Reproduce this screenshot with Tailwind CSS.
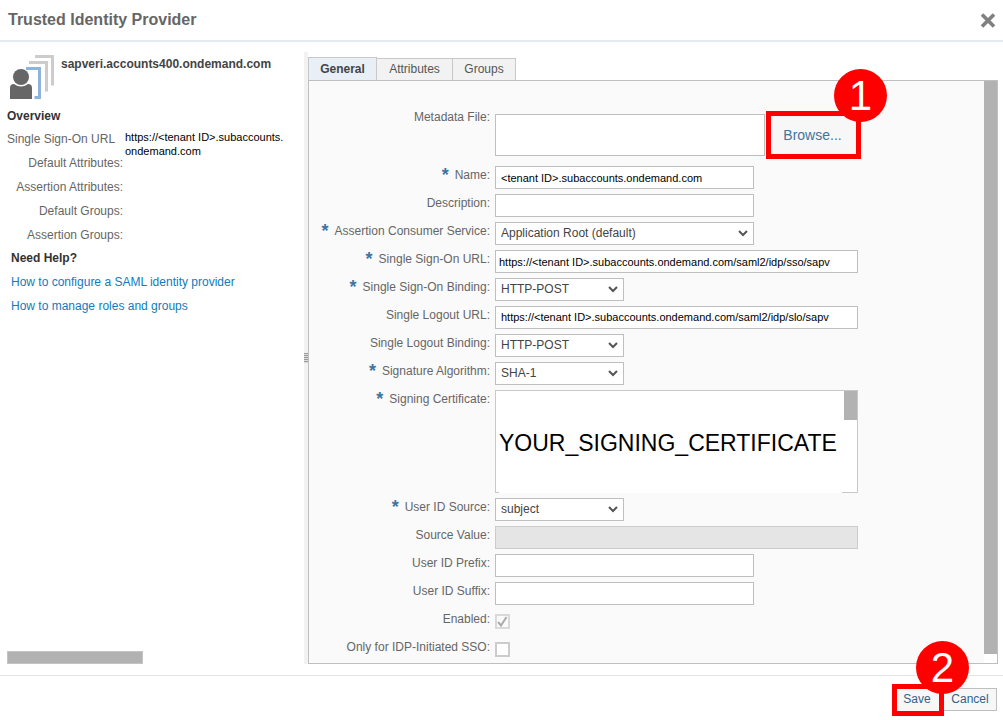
<!DOCTYPE html>
<html lang="en">
<head>
<meta charset="utf-8">
<title>Trusted Identity Provider</title>
<script src="https://cdn.jsdelivr.net/npm/@tailwindcss/browser@4"></script>
</head>
<body class="flex min-h-screen flex-col bg-white font-['Liberation_Sans',Arial,sans-serif] text-[12px] leading-[18px] text-[#666]">
<header class="flex h-[42px] shrink-0 items-center justify-between border-b-2 border-[#e3eaf0] pr-[7px] pl-2">
  <h1 class="text-[16px] font-bold text-[#666]">Trusted Identity Provider</h1>
  <button type="button" aria-label="Close" class="flex size-4 items-center justify-center">
    <svg class="size-4" viewBox="0 0 16 16" fill="none" stroke="#808080" stroke-width="3.6"><path d="M2 2.500l12 12M14 2.500l-12 12"/></svg>
  </button>
</header>

<main class="flex flex-1 pt-[10px] pr-[5px] pb-[11px]">
  <aside class="flex w-[304px] shrink-0 flex-col pl-[7px]">
    <div class="flex gap-[6px]">
      <svg class="mt-[3px] size-[48px]" viewBox="0 0 48 48" fill="none">
        <path d="M28 1.500h17.500v29" stroke="#ccc" stroke-width="3"/>
        <path d="M22 7.500h17.500v29" stroke="#ccc" stroke-width="3"/>
        <path d="M19 13.500h13.500v29h-5" stroke="#8eb4d9" stroke-width="3"/>
        <circle cx="14" cy="22" r="8" fill="#666"/>
        <path d="M3 44V33q0-4 4-4 7 5 14 0 4 0 4 4v11z" fill="#666"/>
      </svg>
      <h2 class="mt-[3px] font-bold text-[#444]">sapveri.accounts400.ondemand.com</h2>
    </div>
    <h3 class="mt-[4px] font-bold text-[#333]">Overview</h3>
    <dl class="mt-[5px] grid grid-cols-[116px_1fr] auto-rows-[18px] gap-y-[6px] text-right">
      <dt class="text-left">Single Sign-On URL</dt>
      <dd class="pl-[2px] text-left text-[11px] leading-[14px] text-black">https://&lt;tenant ID&gt;.subaccounts.<br>ondemand.com</dd>
      <dt class="col-start-1">Default Attributes:</dt>
      <dt class="col-start-1">Assertion Attributes:</dt>
      <dt class="col-start-1">Default Groups:</dt>
      <dt class="col-start-1">Assertion Groups:</dt>
    </dl>
    <div class="mt-[5px] flex flex-col items-start gap-[6px] pl-[4px]">
      <h3 class="font-bold text-[#333]">Need Help?</h3>
      <a href="#" class="text-[#0f7bbd]">How to configure a SAML identity provider</a>
      <a href="#" class="text-[#0f7bbd]">How to manage roles and groups</a>
    </div>
    <div class="mt-auto h-[13px] w-[136px] border border-[#c4c4c4] bg-[#b2b2b2]"></div>
  </aside>

  <div class="flex w-[4px] shrink-0 items-center bg-[#f2f2f2]"><span class="h-[10px] w-full bg-[repeating-linear-gradient(#999_0_1px,#ddd_1px_2px)]"></span></div>

  <section class="flex flex-1 flex-col pt-[5px]">
    <div role="tablist" class="flex h-[23px] items-end text-[#555]">
      <button type="button" role="tab" aria-selected="true" class="h-[23px] w-[69px] border border-b-0 border-[#c8c8c8] bg-[#e8eff7] font-bold text-[#444]">General</button>
      <button type="button" role="tab" class="h-[22px] w-[76px] border border-b-0 border-l-0 border-[#c8c8c8] bg-[#f2f2f2] pb-[2px]">Attributes</button>
      <button type="button" role="tab" class="h-[22px] w-[63px] border border-b-0 border-l-0 border-[#c8c8c8] bg-[#f2f2f2] pb-[2px]">Groups</button>
    </div>
    <div class="flex flex-1 border border-[#bfbfbf] bg-[#fafafa]">
      <form class="flex flex-1 flex-col gap-[5px] pt-[27px]">
        <div class="mb-[2px] flex gap-[5px]">
          <label for="meta" class="w-[181px] shrink-0 text-right">Metadata File:</label>
          <div class="mt-[3px] flex">
            <input id="meta" type="text" class="mt-[3px] h-[42px] w-[270px] border border-[#bfbfbf] bg-white px-[5px]">
            <div class="relative ml-px">
              <button type="button" class="block h-[48px] w-[95px] border-5 border-[#f00] bg-[#f7f7f7] pr-[2px] text-[14px] text-[#45739b]">Browse...</button>
              <span class="absolute -top-[42px] left-[68px] flex size-[53px] items-center justify-center rounded-full bg-[#f00] text-[42px] leading-none text-white">1</span>
            </div>
          </div>
        </div>
        <div class="flex gap-[5px]">
          <label for="name" class="flex w-[181px] shrink-0 justify-end gap-[6px]"><b class="text-[18px] text-[#3f74a3]">*</b>Name:</label>
          <input id="name" type="text" value="&lt;tenant ID&gt;.subaccounts.ondemand.com" class="h-[23px] w-[259px] border border-[#bfbfbf] bg-white px-[5px] text-[11px] text-black">
        </div>
        <div class="flex gap-[5px]">
          <label for="desc" class="w-[181px] shrink-0 text-right">Description:</label>
          <input id="desc" type="text" class="h-[23px] w-[259px] border border-[#bfbfbf] bg-white px-[5px]">
        </div>
        <div class="flex gap-[5px]">
          <label for="acs" class="flex w-[181px] shrink-0 justify-end gap-[6px]"><b class="text-[18px] text-[#3f74a3]">*</b>Assertion Consumer Service:</label>
          <div class="relative">
            <select id="acs" class="block h-[23px] w-[259px] appearance-none border border-[#bfbfbf] bg-white px-[5px] pb-[2px] text-[#444]"><option>Application Root (default)</option></select>
            <svg class="pointer-events-none absolute top-[8px] right-[6px] h-[7px] w-[10px]" viewBox="0 0 10 7" fill="none" stroke="#555" stroke-width="2"><path d="M1 1l4 4 4-4"/></svg>
          </div>
        </div>
        <div class="flex gap-[5px]">
          <label for="sso" class="flex w-[181px] shrink-0 justify-end gap-[6px]"><b class="text-[18px] text-[#3f74a3]">*</b>Single Sign-On URL:</label>
          <input id="sso" type="text" value="https://&lt;tenant ID&gt;.subaccounts.ondemand.com/saml2/idp/sso/sapv" class="h-[23px] w-[363px] border border-[#bfbfbf] bg-white px-[3px] text-[11px] text-black">
        </div>
        <div class="flex gap-[5px]">
          <label for="ssob" class="flex w-[181px] shrink-0 justify-end gap-[6px]"><b class="text-[18px] text-[#3f74a3]">*</b>Single Sign-On Binding:</label>
          <div class="relative">
            <select id="ssob" class="block h-[23px] w-[129px] appearance-none border border-[#bfbfbf] bg-white px-[5px] pb-[2px] text-[#444]"><option>HTTP-POST</option></select>
            <svg class="pointer-events-none absolute top-[8px] right-[6px] h-[7px] w-[10px]" viewBox="0 0 10 7" fill="none" stroke="#555" stroke-width="2"><path d="M1 1l4 4 4-4"/></svg>
          </div>
        </div>
        <div class="flex gap-[5px]">
          <label for="slo" class="w-[181px] shrink-0 text-right">Single Logout URL:</label>
          <input id="slo" type="text" value="https://&lt;tenant ID&gt;.subaccounts.ondemand.com/saml2/idp/slo/sapv" class="h-[23px] w-[363px] border border-[#bfbfbf] bg-white px-[5px] pb-[2px] text-[11px] text-black">
        </div>
        <div class="flex gap-[5px]">
          <label for="slob" class="w-[181px] shrink-0 text-right">Single Logout Binding:</label>
          <div class="relative">
            <select id="slob" class="block h-[23px] w-[129px] appearance-none border border-[#bfbfbf] bg-white px-[5px] pb-[2px] text-[#444]"><option>HTTP-POST</option></select>
            <svg class="pointer-events-none absolute top-[8px] right-[6px] h-[7px] w-[10px]" viewBox="0 0 10 7" fill="none" stroke="#555" stroke-width="2"><path d="M1 1l4 4 4-4"/></svg>
          </div>
        </div>
        <div class="flex gap-[5px]">
          <label for="alg" class="flex w-[181px] shrink-0 justify-end gap-[6px]"><b class="text-[18px] text-[#3f74a3]">*</b>Signature Algorithm:</label>
          <div class="relative">
            <select id="alg" class="block h-[23px] w-[129px] appearance-none border border-[#bfbfbf] bg-white px-[5px] pb-[2px] text-[#444]"><option>SHA-1</option></select>
            <svg class="pointer-events-none absolute top-[8px] right-[6px] h-[7px] w-[10px]" viewBox="0 0 10 7" fill="none" stroke="#555" stroke-width="2"><path d="M1 1l4 4 4-4"/></svg>
          </div>
        </div>
        <div class="flex gap-[5px]">
          <label for="cert" class="flex w-[181px] shrink-0 justify-end gap-[6px]"><b class="text-[18px] text-[#3f74a3]">*</b>Signing Certificate:</label>
          <div class="relative">
            <textarea id="cert" class="block h-[103px] w-[363px] resize-none overflow-hidden border border-[#c8c8c8] bg-white px-[3px] pt-[38px] text-[23px] leading-[28px] text-black">YOUR_SIGNING_CERTIFICATE</textarea>
            <span class="absolute top-px right-px h-[29px] w-[13px] bg-[#b2b2b2]"></span>
            <span class="absolute bottom-0 left-[4px] h-px w-[343px] bg-white"></span>
          </div>
        </div>
        <div class="flex gap-[5px]">
          <label for="uid" class="flex w-[181px] shrink-0 justify-end gap-[6px]"><b class="text-[18px] text-[#3f74a3]">*</b>User ID Source:</label>
          <div class="relative">
            <select id="uid" class="block h-[23px] w-[129px] appearance-none border border-[#bfbfbf] bg-white px-[5px] pb-[2px] text-[#444]"><option>subject</option></select>
            <svg class="pointer-events-none absolute top-[8px] right-[6px] h-[7px] w-[10px]" viewBox="0 0 10 7" fill="none" stroke="#555" stroke-width="2"><path d="M1 1l4 4 4-4"/></svg>
          </div>
        </div>
        <div class="flex gap-[5px]">
          <label for="srcv" class="w-[181px] shrink-0 text-right">Source Value:</label>
          <input id="srcv" type="text" disabled class="h-[23px] w-[363px] border border-[#ccc] bg-[#e5e5e5] px-[5px]">
        </div>
        <div class="flex gap-[5px]">
          <label for="pre" class="w-[181px] shrink-0 text-right">User ID Prefix:</label>
          <input id="pre" type="text" class="h-[23px] w-[259px] border border-[#bfbfbf] bg-white px-[5px]">
        </div>
        <div class="flex gap-[5px]">
          <label for="suf" class="w-[181px] shrink-0 text-right">User ID Suffix:</label>
          <input id="suf" type="text" class="h-[23px] w-[259px] border border-[#bfbfbf] bg-white px-[5px]">
        </div>
        <div class="flex h-[23px] gap-[5px]">
          <label for="en" class="w-[181px] shrink-0 text-right">Enabled:</label>
          <div class="relative mt-[4px] size-[15px]">
            <input id="en" type="checkbox" checked disabled class="block size-[15px] appearance-none border-2 border-[#d9d9d9] bg-[#fafafa]">
            <svg class="pointer-events-none absolute top-[2px] left-[2px] size-[11px]" viewBox="0 0 11 11" fill="none" stroke="#aaa" stroke-width="2"><path d="M1 6l3 3.500L9.500 1"/></svg>
          </div>
        </div>
        <div class="flex h-[18px] gap-[5px]">
          <label for="idp" class="w-[181px] shrink-0 text-right">Only for IDP-Initiated SSO:</label>
          <input id="idp" type="checkbox" class="mt-[4px] block size-[15px] appearance-none border-2 border-[#ccc] bg-white">
        </div>
      </form>
      <div class="w-[13px] bg-white pb-[9px]"><div class="h-full bg-[#b2b2b2]"></div></div>
    </div>
  </section>
</main>

<footer class="flex h-[45px] shrink-0 items-start justify-end border-t border-[#e5e5e5] pt-[8px] pr-[6px]">
  <div class="relative z-10">
    <button type="button" class="block h-[32px] w-[52px] border-5 border-[#f00] bg-[#f7f7f7] pr-[2px] pb-[2px] text-[#346187]">Save</button>
    <span class="absolute -top-[43px] left-[24px] flex size-[53px] items-center justify-center rounded-full bg-[#f00] text-[42px] leading-none text-white">2</span>
  </div>
  <button type="button" class="mt-[4px] -ml-px h-[23px] w-[54px] border border-[#bfbfbf] bg-[#f7f7f7] pb-[2px] text-[#346187]">Cancel</button>
</footer>
</body>
</html>
